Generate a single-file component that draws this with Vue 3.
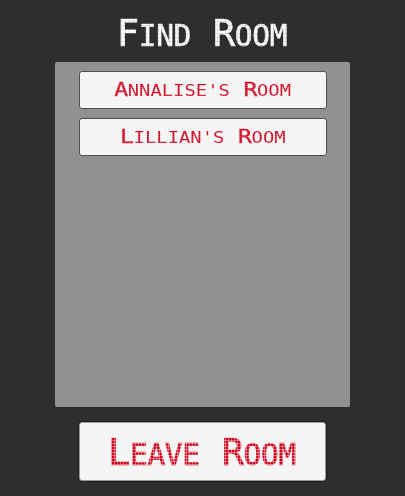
<script setup>
const rooms = ["Annalise's Room", "Lillian's Room"]

// Each word becomes a large initial (with its leading space) and a smaller remainder.
const split = (label) =>
  label.split(' ').map((word, i) => ({ head: (i ? ' ' : '') + word[0], tail: word.slice(1) }))
</script>

<template>
  <main class="screen">
    <h1 class="title dots">
      <span v-for="(w, i) in split('Find Room')" :key="i" class="word"><span class="cap">{{ w.head }}</span><span class="small">{{ w.tail }}</span></span>
    </h1>
    <section class="panel">
      <button v-for="room in rooms" :key="room" class="room">
        <span class="label dots">
          <span v-for="(w, i) in split(room)" :key="i" class="word"><span class="cap">{{ w.head }}</span><span class="small">{{ w.tail }}</span></span>
        </span>
      </button>
    </section>
    <button class="leave">
      <span class="label dots">
        <span v-for="(w, i) in split('Leave Room')" :key="i" class="word"><span class="cap">{{ w.head }}</span><span class="small">{{ w.tail }}</span></span>
      </span>
    </button>
  </main>
</template>

<style>
body {
  background: #2e2e2e;
}
</style>

<style scoped>
.screen {
  box-sizing: border-box;
  height: 496px;
  display: flex;
  flex-direction: column;
  align-items: center;
  background: #2e2e2e;
  overflow: hidden;
  font-family: "DejaVu Sans Mono", monospace;
}
.dots {
  display: flex;
  align-items: baseline;
  white-space: pre;
  text-transform: uppercase;
  font-weight: 400;
  color: transparent;
  background-clip: text;
  -webkit-background-clip: text;
  -webkit-text-stroke: 0.7px transparent;
}
.title {
  box-sizing: border-box;
  height: 62px;
  margin: 0;
  padding-top: 12px;
  padding-right: 1px;
  line-height: 44px;
  background-color: #fff;
  background-image:
    repeating-linear-gradient(90deg, rgba(46, 46, 46, 0.12) 0 1px, transparent 1px 4px),
    repeating-linear-gradient(0deg, rgba(46, 46, 46, 0.12) 0 1px, transparent 1px 4px);
}
.title .cap,
.leave .cap {
  font-size: 37px;
  letter-spacing: -0.4px;
}
.title .small,
.leave .small {
  font-size: 29.5px;
  letter-spacing: -0.3px;
}
.panel {
  box-sizing: border-box;
  width: 295px;
  height: 345px;
  padding-top: 9px;
  display: flex;
  flex-direction: column;
  align-items: center;
  gap: 9px;
  background: #919191;
  border-radius: 2px;
}
button {
  box-sizing: border-box;
  display: flex;
  justify-content: center;
  align-items: center;
  padding: 0;
  background: #f5f5f5;
  font-family: inherit;
}
.room {
  width: 248px;
  height: 38px;
  border: 1px solid #505050;
  border-radius: 3px;
}
.room .label {
  padding-top: 2px;
  line-height: 24px;
  transform: scaleX(1.186);
  background-color: #d0021b;
  background-image: repeating-linear-gradient(0deg, rgba(245, 245, 245, 0.18) 0 1px, transparent 1px 2px);
  -webkit-text-stroke-width: 0;
}
.room .cap {
  font-size: 19.5px;
  letter-spacing: -0.3px;
  -webkit-text-stroke-width: 0.3px;
}
.room .small {
  font-size: 15.9px;
}
.leave {
  width: 247px;
  height: 59px;
  margin-top: 15px;
  border: 1px solid #999;
  border-radius: 3px;
  box-shadow: 0 0 1px 1px #202020;
}
.leave .label {
  padding-top: 10px;
  padding-right: 1px;
  line-height: 50px;
  background-color: #d0021b;
  background-image:
    repeating-linear-gradient(90deg, rgba(245, 245, 245, 0.4) 0 1px, transparent 1px 3px),
    repeating-linear-gradient(0deg, rgba(245, 245, 245, 0.4) 0 1px, transparent 1px 3px);
}
</style>
